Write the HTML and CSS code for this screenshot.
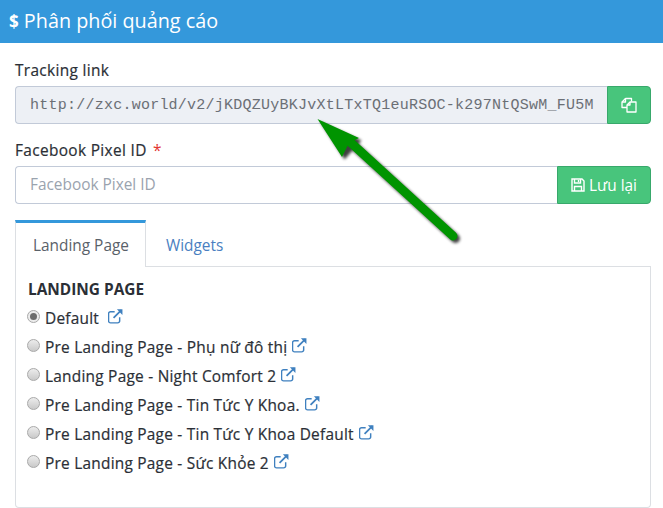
FILE: index.html
```html
<!DOCTYPE html>
<html lang="vi">
<head>
<meta charset="utf-8">
<title>Phân phối quảng cáo</title>
<link rel="stylesheet" href="styles.css">
</head>
<body>
<header class="head"><span class="dollar">$</span> Phân phối quảng cáo</header>
<main class="content">
  <label class="lbl">Tracking link</label>
  <div class="group">
    <div class="field mono">http://zxc.world/v2/jKDQZUyBKJvXtLTxTQ1euRSOC-k297NtQSwM_FU5M</div>
    <button class="btn btn-copy">
      <svg class="ico-copy" viewBox="0 0 16 16" width="16" height="16" fill="none" stroke="#fff" stroke-width="1.3" stroke-linejoin="round"><path d="M4.500 1.500h6l0 3M4.500 1.500 1 5v5.500h5"/><path d="M4.500 1.500V5H1"/><path d="M9 5h6v10H6V8z"/><path d="M9 5v3H6"/></svg>
    </button>
  </div>
  <label class="lbl">Facebook Pixel ID <span class="req">*</span></label>
  <div class="group group-last">
    <div class="field ph">Facebook Pixel ID</div>
    <button class="btn btn-save">
      <svg viewBox="0 0 14 14" width="14" height="14" fill="none" stroke="#fff" stroke-width="1.4"><path d="M1 1h10l2 2v10H1z"/><path d="M3.500 1v4h6V1M3.500 13V8.500h7V13"/><path d="M7.500 2v2" /></svg>
      Lưu lại
    </button>
  </div>
  <nav class="tabs">
    <a class="tab active">Landing Page</a>
    <a class="tab">Widgets</a>
  </nav>
  <section class="panel">
    <h4 class="sec">LANDING PAGE</h4>
    <ul class="opts">
      <li class="opt"><span class="radio on"></span>Default<svg class="ext first" viewBox="1 1 13.500 13.500" width="15" height="15"><use href="#e"/></svg></li>
      <li class="opt"><span class="radio"></span>Pre Landing Page - Phụ nữ đô thị<svg class="ext" viewBox="1 1 13.500 13.500" width="15" height="15"><use href="#e"/></svg></li>
      <li class="opt"><span class="radio"></span>Landing Page - Night Comfort 2<svg class="ext" viewBox="1 1 13.500 13.500" width="15" height="15"><use href="#e"/></svg></li>
      <li class="opt"><span class="radio"></span>Pre Landing Page - Tin Tức Y Khoa.<svg class="ext first-s" viewBox="1 1 13.500 13.500" width="15" height="15"><use href="#e"/></svg></li>
      <li class="opt"><span class="radio"></span>Pre Landing Page - Tin Tức Y Khoa Default<svg class="ext" viewBox="1 1 13.500 13.500" width="15" height="15"><use href="#e"/></svg></li>
      <li class="opt"><span class="radio"></span>Pre Landing Page - Sức Khỏe 2<svg class="ext" viewBox="1 1 13.500 13.500" width="15" height="15"><use href="#e"/></svg></li>
    </ul>
  </section>
</main>
<svg class="defs" width="0" height="0"><defs>
  <g id="e" fill="none" stroke="#3f80bf" stroke-width="1.300"><path d="M11.500 8.500v3.200a1.800 1.800 0 0 1-1.800 1.800H3.300a1.800 1.800 0 0 1-1.800-1.800V5.300a1.800 1.800 0 0 1 1.800-1.800H7"/><path d="M6 9 13 2" stroke-width="1.600"/><path d="M9 1.300h5v5z" fill="#3f80bf" stroke="none"/></g>
</defs></svg>
<svg class="arrow" viewBox="0 0 663 508" width="663" height="508">
  <defs><filter id="sh" x="-20%" y="-20%" width="150%" height="150%"><feGaussianBlur stdDeviation="1.800"/></filter></defs>
  <g transform="translate(2.500 2.500)" filter="url(#sh)" opacity=".75">
    <path d="M349 141 453 236" stroke="#000" stroke-width="9" stroke-linecap="round" fill="none"/>
    <path d="M317.500 119 359 138 342 157z" fill="#000"/>
  </g>
  <path d="M349 141 453 236" stroke="#009400" stroke-width="9" stroke-linecap="round" fill="none"/>
  <path d="M317.500 119 359 138 349 143 342 157z" fill="#009400"/>
</svg>
</body>
</html>
```
FILE: styles.css
```css
* { box-sizing: border-box; }
html, body { margin: 0; padding: 0; }
body {
  width: 663px;
  height: 508px;
  overflow: hidden;
  position: relative;
  background: #fff;
  color: #2f3640;
  font-family: "Open Sans", sans-serif;
  font-size: 15.4px;
}
.head {
  height: 43px;
  background: #3498db;
  color: #fff;
  font-size: 19.8px;
  line-height: 41px;
  padding-left: 9px;
}
.dollar { font-size: 17px; font-weight: 700; }
.content { padding: 18px 12px 0 15px; }
.lbl {
  display: block;
  height: 25px;
  line-height: 19px;
  font-size: 15.4px;
  letter-spacing: .35px;
  color: #2b2f36;
  -webkit-text-stroke: .2px #2b2f36;
}
.req { color: #e3342f; margin-left: 2px; -webkit-text-stroke: 0; }
.group { display: flex; height: 38px; margin-bottom: 17px; }
.group-last { margin-bottom: 16px; }
.field {
  flex: 1;
  border: 1px solid #c2cad8;
  border-right: 0;
  border-radius: 4px 0 0 4px;
  padding-left: 14px;
  line-height: 36px;
  white-space: nowrap;
  overflow: hidden;
}
.mono {
  background: #edf0f5;
  color: #6b6f75;
  font-family: "Liberation Mono", monospace;
  font-size: 15px;
  letter-spacing: .24px;
  line-height: 38px;
}
.ph { color: #9aa3ae; font-size: 15.4px; }
.btn {
  border: 1px solid #38a86b;
  background: #48c57c;
  color: #fff;
  border-radius: 0 4px 4px 0;
  font-family: inherit;
  font-size: 15.4px;
  padding: 0;
  display: flex;
  align-items: center;
  justify-content: center;
  gap: 4px;
}
.btn-copy { width: 44px; }
.btn-save { width: 94px; }
.tabs { display: flex; height: 47px; border-bottom: 1px solid #dcdfe3; }
.tab {
  height: 47px;
  line-height: 45px;
  font-size: 15.4px;
  color: #4a7fc1;
  border-top: 3px solid transparent;
  padding-left: 20px;
}
.tab.active {
  width: 131px;
  color: #5a6169;
  background: #fff;
  border-top-color: #3498db;
  border-left: 1px solid #dcdfe3;
  border-right: 1px solid #dcdfe3;
  padding-left: 17px;
}
.panel {
  height: 241px;
  border: 1px solid #dcdfe3;
  border-top: 0;
  border-radius: 0 0 4px 4px;
  padding: 13px 12px 0;
}
.sec {
  margin: 0 0 4px;
  font-size: 15.4px;
  line-height: 20px;
  font-weight: 700;
  color: #2b2f36;
}
.opts { list-style: none; margin: 0; padding: 0; }
.opt {
  height: 29px;
  display: flex;
  align-items: center;
  font-size: 15.4px;
  letter-spacing: .25px;
  color: #2b2f36;
  -webkit-text-stroke: .2px #2b2f36;
}
.radio {
  width: 13px;
  height: 13px;
  border-radius: 50%;
  border: 1px solid #a9a9a9;
  background: linear-gradient(#ececec, #c9c9c9);
  margin: -5px 5px 0 -1px;
  flex: none;
  position: relative;
}
.radio.on { background: #ececec; }
.radio.on::after {
  content: "";
  position: absolute;
  left: 2px;
  top: 2px;
  width: 7px;
  height: 7px;
  border-radius: 50%;
  background: #6d6d6d;
}
.ext { margin: -5px 0 0 5px; flex: none; }
.ext.first { margin-left: 9px; }
.ext.first-s { margin-left: 5px; }
.defs { position: absolute; }
.arrow { position: absolute; left: 0; top: 0; pointer-events: none; }
```
